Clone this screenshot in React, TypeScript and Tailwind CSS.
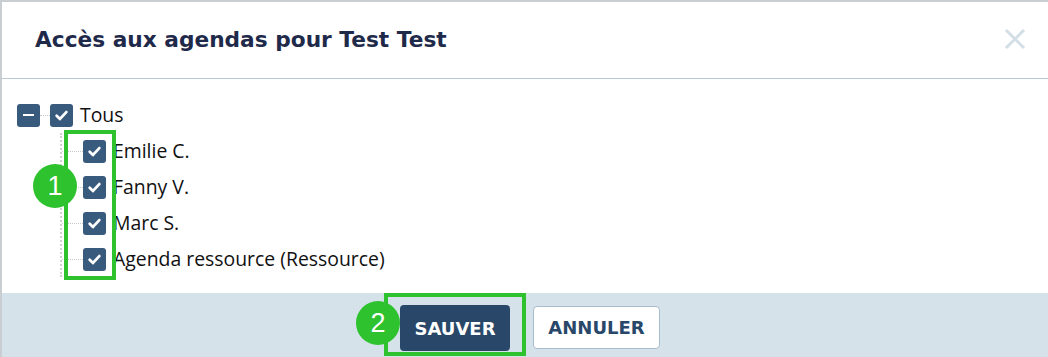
import React from 'react'

const children = ['Emilie C.', 'Fanny V.', 'Marc S.', 'Agenda ressource (Ressource)']

function CheckBox() {
  return (
    <span className="flex h-[23px] w-[23px] shrink-0 items-center justify-center rounded-[3px] bg-[#375a7d]">
      <svg width="15" height="15" viewBox="0 0 14 14" fill="none">
        <path d="M2.5 7.2 L5.6 10.2 L11.5 3.8" stroke="white" strokeWidth="2.6" strokeLinecap="round" strokeLinejoin="round" />
      </svg>
    </span>
  )
}

function Badge({ n }: { n: string }) {
  return (
    <span className="flex h-[44px] w-[44px] items-center justify-center rounded-full bg-[#2ec22e] text-[27px] leading-none text-white" style={{ fontFamily: '"Liberation Sans", Arial, sans-serif' }}>
      {n}
    </span>
  )
}

export default function App() {
  return (
    <div className="h-[357px] w-full overflow-hidden bg-[#c9ced3] pl-[2px] pt-[2px]" style={{ fontFamily: '"Open Sans", sans-serif' }}>
      <div className="flex h-full flex-col bg-white">
        {/* Header */}
        <div className="flex h-[77px] shrink-0 items-center justify-between border-b border-[#b9cad6] pl-[33px] pr-[22px]">
          <h1 className="mt-[1px] text-[21.7px] font-bold text-[#1f2a4b]" style={{ fontFamily: '"DejaVu Sans", sans-serif' }}>
            Accès aux agendas pour Test Test
          </h1>
          <svg width="22" height="22" viewBox="0 0 22 22" className="mt-[-2px]">
            <path d="M2 2 L20 20 M20 2 L2 20" stroke="#d3dfe7" strokeWidth="3" />
          </svg>
        </div>

        {/* Body */}
        <div className="relative flex-1 pb-[16px] pl-[15px] pt-[18px] text-[19.4px] text-[#111]">
          <div className="flex h-[36px] items-center">
            <span className="flex h-[23px] w-[23px] items-center justify-center rounded-[3px] bg-[#375a7d]">
              <span className="h-[2.5px] w-[11px] bg-white" />
            </span>
            <span className="w-[10px] border-t border-dotted border-[#c8c8c8]" />
            <CheckBox />
            <span className="ml-[7px]">Tous</span>
          </div>
          <div className="ml-[43px] border-l-2 border-dotted border-[#d0d0d0]">
            {children.map((c) => (
              <div key={c} className="flex h-[36px] items-center">
                <span className="w-[21px] border-t border-dotted border-[#c8c8c8]" />
                <CheckBox />
                <span className="ml-[7px]">{c}</span>
              </div>
            ))}
          </div>

          {/* annotation 1 */}
          <div className="absolute left-[62px] top-[51px] h-[150px] w-[52px] border-4 border-[#2ec22e]" />
          <div className="absolute left-[31px] top-[85px]">
            <Badge n="1" />
          </div>
        </div>

        {/* Footer */}
        <div className="relative flex h-[64px] shrink-0 items-start justify-center gap-[23px] bg-[#d6e2ea] pl-[10px] pt-[12px]" style={{ fontFamily: '"DejaVu Sans", sans-serif' }}>
          <button className="h-[46px] w-[110px] rounded-[4px] bg-[#284769] text-[18px] font-bold text-white">
            SAUVER
          </button>
          <button className="mt-[1px] h-[43px] w-[127px] rounded-[4px] border border-[#a8bccb] bg-white text-[18px] font-bold text-[#284769]">
            ANNULER
          </button>
          <div className="absolute left-[382px] top-[0px] h-[63px] w-[142px] border-4 border-[#2ec22e]" />
          <div className="absolute left-[354px] top-[8px]">
            <Badge n="2" />
          </div>
        </div>
      </div>
    </div>
  )
}
